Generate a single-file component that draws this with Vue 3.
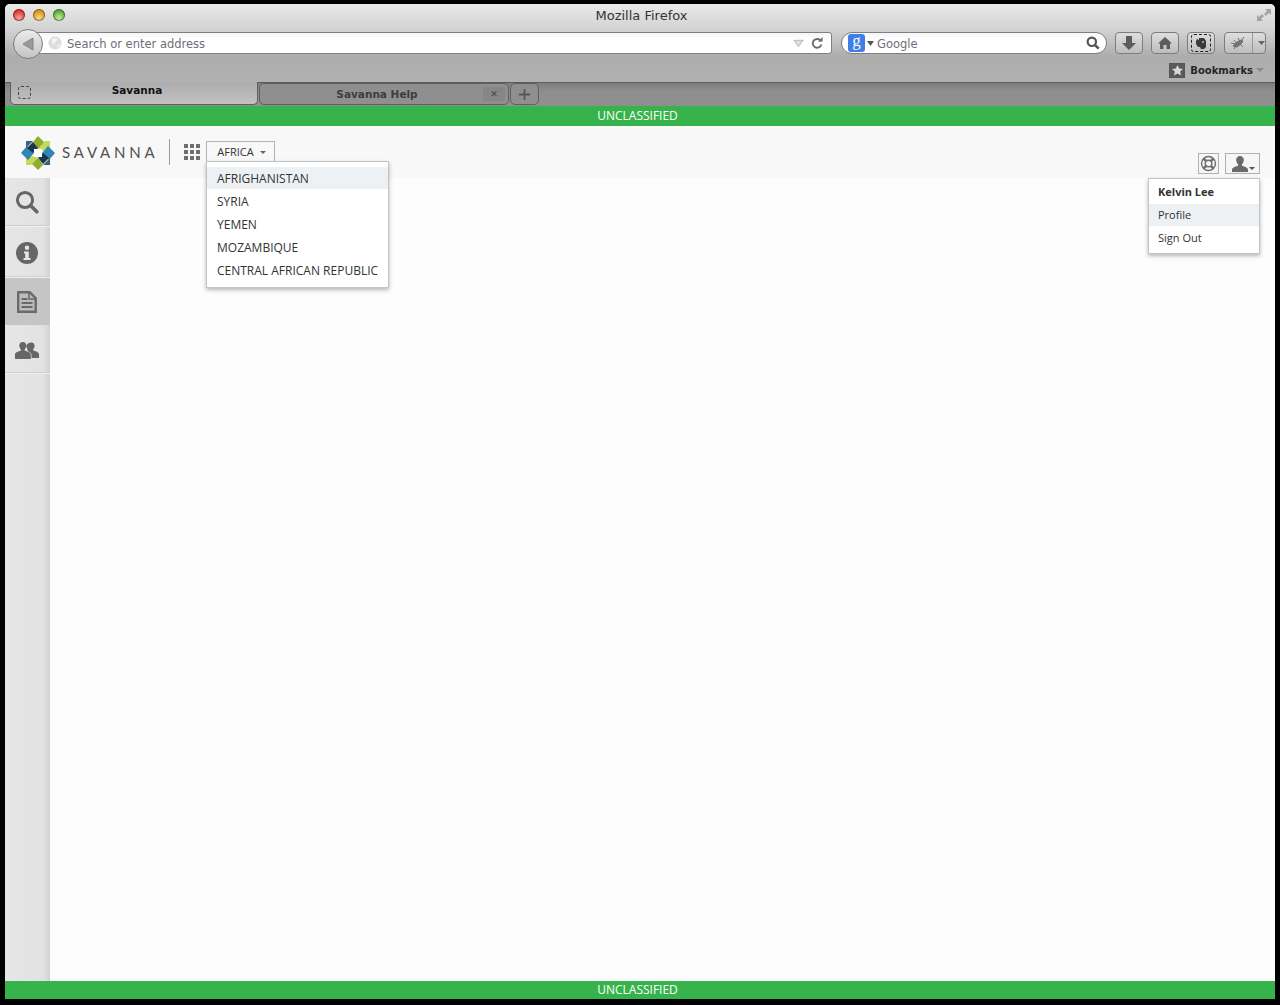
<script setup>
const regions = ['AFRIGHANISTAN', 'SYRIA', 'YEMEN', 'MOZAMBIQUE', 'CENTRAL AFRICAN REPUBLIC']
</script>

<template>
  <div class="screen">
    <div class="window">
      <div class="chrome">
        <div class="titlebar">
          <div class="lights">
            <span class="light red"></span>
            <span class="light amber"></span>
            <span class="light green"></span>
          </div>
          <span class="title">Mozilla Firefox</span>
          <svg class="resize" width="16" height="14" viewBox="0 0 16 14">
            <path d="M9 1h6v6l-2-2-3 3-2-2 3-3zM1 7l2 2 3-3 2 2-3 3 2 2H1z" fill="#a4a4a4" />
          </svg>
        </div>

        <div class="navrow">
          <div class="back">
            <svg width="14" height="14" viewBox="0 0 14 14"><path d="M12 1v12L2 7z" fill="#9a9a9a" stroke="#868686" /></svg>
          </div>
          <div class="urlbar">
            <svg class="globe" width="14" height="14" viewBox="0 0 14 14">
              <circle cx="7" cy="7" r="6.500" fill="#dcdcdc" />
              <path d="M4 3l4-1 2 2-3 2-1 3-2-2zM10 8l2-1-1 4-2 1z" fill="#f4f4f4" />
            </svg>
            <span class="placeholder">Search or enter address</span>
            <svg class="star-drop" width="11" height="9" viewBox="0 0 12 9"><path d="M1 1h10L6 8z" fill="#dedede" stroke="#b4b4b4" /></svg>
            <svg class="reload" width="12" height="12" viewBox="0 0 12 12">
              <path d="M10 4.200A4.400 4.400 0 1 0 10.400 7.600" fill="none" stroke="#6c6c6c" stroke-width="1.900" />
              <path d="M7 4.600h4.600V0z" fill="#6c6c6c" />
            </svg>
          </div>
          <div class="searchbar">
            <span class="g-badge">g</span>
            <svg class="mini" width="7" height="5" viewBox="0 0 7 5"><path d="M0 0h7L3.500 5z" fill="#555" /></svg>
            <span class="placeholder google">Google</span>
            <svg class="mag" width="14" height="14" viewBox="0 0 13 13">
              <circle cx="5.400" cy="5.400" r="3.900" fill="none" stroke="#555" stroke-width="2" />
              <path d="M8.400 8.400l3.400 3.400" stroke="#555" stroke-width="2.400" />
            </svg>
          </div>
          <div class="tool first">
            <svg width="16" height="16" viewBox="0 0 16 16"><path d="M5 1h6v7h4l-7 7-7-7h4z" fill="#5c5c5c" /></svg>
          </div>
          <div class="tool">
            <svg width="16" height="14" viewBox="0 0 16 14"><path d="M8 1L1 7.500h2V13h3.500V9h3v4H13V7.500h2z" fill="#5c5c5c" /></svg>
          </div>
          <div class="tool">
            <div class="dashed">
              <svg width="12" height="13" viewBox="0 0 12 13"><path d="M2 2l2 1V1h5l2 3v6l-2 2H6L5 10H3L1 7V4z" fill="#3a3a3a" /><circle cx="8" cy="5" r="1" fill="#bbb" /></svg>
            </div>
          </div>
          <div class="tool split">
            <svg class="bug" width="18" height="14" viewBox="0 0 18 14">
              <path d="M4 10l4-4 4-2 2 1-2 3-4 3zM9 2l2 4M15 1l-3 4M5 4l3 4M11 8l3 3M2 7l4 1M7 10l-2 3" stroke="#4e4e4e" stroke-width="1" fill="#5a5a5a" />
            </svg>
            <span class="divider"></span>
            <svg width="7" height="4" viewBox="0 0 7 4"><path d="M0 0h7L3.500 4z" fill="#666" /></svg>
          </div>
        </div>

        <div class="bookrow">
          <span class="book-icon">
            <svg width="11" height="11" viewBox="0 0 11 11"><path d="M5.500 0l1.700 3.500 3.800.5-2.800 2.600.7 3.800-3.400-1.800-3.400 1.800.7-3.800L0 4l3.800-.5z" fill="#d8d8d8" /></svg>
          </span>
          <span class="book-label">Bookmarks</span>
          <svg width="8" height="4" viewBox="0 0 8 4"><path d="M0 0h8L4 4z" fill="#8a8a8a" /></svg>
        </div>
      </div>

      <div class="tabs">
        <div class="tab current">
          <span class="tab-loading"></span>
          <span class="tab-text">Savanna</span>
        </div>
        <div class="tab inactive">
          <span class="tab-text">Savanna Help</span>
          <span class="tab-close">✕</span>
        </div>
        <div class="tab plus">
          <svg width="11" height="11" viewBox="0 0 11 11"><path d="M5.500 0v11M0 5.500h11" stroke="#555" stroke-width="1.800" /></svg>
        </div>
      </div>

      <div class="banner top">UNCLASSIFIED</div>

      <header class="appbar">
        <div class="brand">
          <svg class="logo" width="34" height="34" viewBox="0 0 34 34">
            <path d="M17 0l7 7-7 6-5-7z" fill="#8fae2c" />
            <path d="M24 5h5v7l-8 3-4-2z" fill="#c3da5a" />
            <path d="M34 17l-6 7-7-7 6-7z" fill="#2e87b4" />
            <path d="M22 17l6 5-6 6-5-6z" fill="#17384f" />
            <path d="M29 22v7h-7z" fill="#3f6079" />
            <path d="M17 34l-7-7 7-6 5 8z" fill="#8fae2c" />
            <path d="M5 22l7-2 5 2-7 7H5z" fill="#c3da5a" />
            <path d="M0 17l6-7 7 7-6 7z" fill="#2e87b4" />
            <path d="M6 12l6-6 5 6-5 5z" fill="#17384f" />
            <path d="M5 5h7l-7 7z" fill="#3f6079" />
            <rect x="13" y="13" width="8" height="8" fill="#fff" />
          </svg>
          <span class="wordmark">SAVANNA</span>
        </div>
        <span class="vrule"></span>
        <svg class="grid" width="16" height="16" viewBox="0 0 16 16" fill="#6e6e6e">
          <rect width="4" height="4" /><rect x="6" width="4" height="4" /><rect x="12" width="4" height="4" />
          <rect y="6" width="4" height="4" /><rect x="6" y="6" width="4" height="4" /><rect x="12" y="6" width="4" height="4" />
          <rect y="12" width="4" height="4" /><rect x="6" y="12" width="4" height="4" /><rect x="12" y="12" width="4" height="4" />
        </svg>
        <button class="region-btn">AFRICA<i class="caret"></i></button>
        <ul class="menu region-menu">
          <li v-for="(r, i) in regions" :key="r" :class="{ hot: i === 0 }">{{ r }}</li>
        </ul>

        <div class="user-tools">
          <button class="icon-btn">
            <svg width="17" height="17" viewBox="0 0 17 17">
              <circle cx="8.500" cy="8.500" r="7" fill="#f4f4f4" stroke="#6e6e6e" stroke-width="1.400" />
              <circle cx="8.500" cy="8.500" r="3.300" fill="#f4f4f4" stroke="#6e6e6e" stroke-width="1.400" />
              <path d="M3.600 3.600l2.600 2.600M13.400 3.600l-2.600 2.600M3.600 13.400l2.600-2.600M13.400 13.400l-2.600-2.600" stroke="#6e6e6e" stroke-width="2.600" />
            </svg>
          </button>
          <button class="icon-btn user">
            <svg width="18" height="16" viewBox="0 0 17 16"><path d="M8.500 0c2.500 0 3.800 1.800 3.800 4 0 1.900-.9 3.400-1.800 4.300v1.500c2.500.8 6 1.700 6 4.200v2H.5v-2c0-2.500 3.500-3.400 6-4.200V8.300C5.600 7.400 4.700 5.900 4.700 4c0-2.200 1.300-4 3.800-4z" fill="#6a6a6a" /></svg>
            <i class="caret small"></i>
          </button>
        </div>
        <ul class="menu user-menu">
          <li class="name">Kelvin Lee</li>
          <li class="hot">Profile</li>
          <li>Sign Out</li>
        </ul>
      </header>

      <div class="body">
        <nav class="sidebar">
          <div class="side-item s1">
            <svg width="24" height="24" viewBox="0 0 24 24">
              <circle cx="10" cy="10" r="7.600" fill="none" stroke="#666" stroke-width="3" />
              <path d="M15.800 15.800l6 6" stroke="#666" stroke-width="3.600" stroke-linecap="round" />
            </svg>
          </div>
          <div class="side-item s2">
            <svg width="22" height="22" viewBox="0 0 22 22">
              <circle cx="11" cy="11" r="11" fill="#666" />
              <circle cx="11" cy="5.800" r="2.200" fill="#e5e5e5" />
              <path d="M8 9.500h4.800V16H14.500v2h-7v-2h1.700v-4.500H8z" fill="#e5e5e5" />
            </svg>
          </div>
          <div class="side-item on">
            <svg width="20" height="22" viewBox="0 0 20 22">
              <path d="M1.200 1.200h11.500l6 6v13.600H1.200z" fill="#bcbcbc" stroke="#6a6a6a" stroke-width="2.400" />
              <path d="M12 1v7h7" fill="none" stroke="#6a6a6a" stroke-width="1.600" />
              <path d="M4.500 8h6M4.500 12h11M4.500 16h11" stroke="#6a6a6a" stroke-width="2" />
            </svg>
          </div>
          <div class="side-item s4">
            <svg width="24" height="18" viewBox="0 0 24 18">
              <path d="M16.500 1.500c2 0 3.100 1.500 3.100 3.300 0 1.400-.6 2.500-1.400 3.300v1.300c2 .7 5.800 1.200 5.800 3.900V17h-7.500v-3c0-2.100-1.900-3.200-4-4V8.100c-.8-.8-1.100-1.900-1.100-3.300 0-1.800 3-3.300 5.100-3.300z" fill="#666" />
              <path d="M7.800 1c2.200 0 3.500 1.600 3.500 3.600 0 1.500-.7 2.800-1.500 3.600v1.600c2.300.7 6 1.400 6 3.900V18H0v-4.300c0-2.500 3.500-3.200 5.800-3.900V8.200C5 7.400 4.300 6.100 4.300 4.600 4.300 2.600 5.600 1 7.800 1z" fill="#666" />
            </svg>
          </div>
        </nav>
        <main class="content"></main>
      </div>

      <div class="banner bottom">UNCLASSIFIED</div>
    </div>
  </div>
</template>

<style>
html, body { margin: 0; background: #000; }
</style>

<style scoped>
.screen {
  width: 1280px;
  height: 1005px;
  box-sizing: border-box;
  padding: 4px 5px 6px;
  background: #000;
  overflow: hidden;
}
.window {
  height: 995px;
  display: flex;
  flex-direction: column;
  border-radius: 5px 5px 0 0;
  overflow: hidden;
  font-family: "Open Sans", sans-serif;
  background: #fdfdfd;
}

/* browser chrome */
.chrome {
  height: 78px;
  display: flex;
  flex-direction: column;
  flex: none;
  background: linear-gradient(to bottom, #e9e9e9 0, #d0d0d0 28px, #adadad 52px, #b1b1b1 78px);
}
.titlebar {
  height: 28px;
  flex: none;
  display: flex;
  align-items: flex-start;
  position: relative;
}
.lights { display: flex; gap: 8px; padding: 5px 0 0 8px; }
.light { width: 12px; height: 12px; border-radius: 50%; box-shadow: inset 0 0 0 1px rgba(0,0,0,.35); }
.red { background: radial-gradient(circle at 50% 75%, #f9a3a0, #d8382f 65%); }
.amber { background: radial-gradient(circle at 50% 75%, #fbd88a, #d6921e 65%); }
.green { background: radial-gradient(circle at 50% 75%, #c8ee9a, #58a83a 65%); }
.title {
  position: absolute;
  left: 0;
  right: 0;
  top: 3px;
  padding-left: 3px;
  text-align: center;
  font: 13px/18px "DejaVu Sans", sans-serif;
  color: #333;
}
.resize { position: absolute; right: 3px; top: 4px; }

.navrow { height: 22px; display: flex; align-items: stretch; position: relative; flex: none; }
.back {
  position: relative;
  z-index: 1;
  width: 28px;
  height: 28px;
  margin: -3px -6px 0 8px;
  border-radius: 50%;
  border: 1px solid #7c7c7c;
  background: linear-gradient(#ececec, #c4c4c4);
  display: flex;
  align-items: center;
  justify-content: center;
  flex: none;
}
.urlbar, .searchbar {
  box-sizing: border-box;
  background: linear-gradient(#f6f6f6, #fff 40%);
  border: 1px solid #7f7f7f;
  display: flex;
  align-items: center;
}
.urlbar { width: 795px; border-radius: 0 3px 3px 0; padding: 0 8px 0 10px; }
.globe { margin-right: 5px; }
.placeholder { font: 11.500px "DejaVu Sans", sans-serif; color: #6e6e78; padding-top: 1px; }
.star-drop { margin-left: auto; margin-right: 7px; }
.searchbar { width: 266px; margin-left: 9px; border-radius: 11px; padding: 0 6px 0 6px; }
.g-badge {
  width: 17px;
  height: 18px;
  background: #3f7de8;
  border-radius: 3px;
  color: #fff;
  font: 17px/14px "Liberation Serif", serif;
  text-align: center;
}
.mini { margin-left: 2px; }
.google { margin-left: 3px; }
.mag { margin-left: auto; }
.tool {
  box-sizing: border-box;
  width: 28px;
  margin-left: 8px;
  border: 1px solid #7d7d7d;
  border-radius: 4px;
  background: linear-gradient(#dedede, #bdbdbd);
  display: flex;
  align-items: center;
  justify-content: center;
}
.first { margin-left: 8px; }
.dashed {
  width: 18px;
  height: 16px;
  border: 1px dashed #222;
  border-radius: 3px;
  display: flex;
  align-items: center;
  justify-content: center;
}
.split { width: 42px; margin-left: 9px; justify-content: flex-start; padding-left: 4px; }
.divider { width: 1px; height: 20px; background: #9a9a9a; margin: 0 5px 0 5px; }
.bug { opacity: .75; }
.bookrow {
  height: 28px;
  display: flex;
  align-items: center;
  justify-content: flex-end;
  padding: 4px 11px 0 0;
  box-sizing: border-box;
}
.book-icon {
  width: 16px;
  height: 15px;
  background: #5a5a5a;
  border: 1px solid #555;
  box-sizing: border-box;
  display: flex;
  align-items: center;
  justify-content: center;
  margin-right: 5px;
}
.book-label {
  font: bold 10px "DejaVu Sans", sans-serif;
  color: #262626;
  margin-right: 3px;
}

/* tabs */
.tabs {
  height: 24px;
  flex: none;
  box-sizing: border-box;
  border-top: 1px solid #5c5c5c;
  background: linear-gradient(#7d7d7d, #8f8f8f 8px);
  display: flex;
  align-items: stretch;
  padding: 0 0 1px 5px;
  gap: 1px;
}
.tab {
  box-sizing: border-box;
  border: 1px solid #5f5f5f;
  border-top: 0;
  border-radius: 0 0 5px 5px;
  display: flex;
  align-items: center;
  position: relative;
}
.current {
  width: 248px;
  margin-top: -1px;
  background: linear-gradient(#acacac, #c2c2c2);
  border-top: 0;
}
.inactive { width: 250px; background: #8f8f8f; border-top: 1px solid #5f5f5f; border-radius: 5px; }
.plus { width: 29px; justify-content: center; background: #8f8f8f; border-top: 1px solid #5f5f5f; border-radius: 5px; }
.tab-loading {
  position: absolute;
  left: 7px;
  top: 4px;
  width: 13px;
  height: 13px;
  border: 1px dashed #444;
  border-radius: 3px;
  box-sizing: border-box;
}
.tab-text {
  width: 100%;
  text-align: center;
  font: bold 10.500px "DejaVu Sans", sans-serif;
  color: #111;
  margin-top: -7px;
  padding-left: 6px;
  box-sizing: border-box;
}
.inactive .tab-text { color: #3d3d3d; margin-top: -1px; padding: 0 14px 0 0; }
.tab-close {
  position: absolute;
  right: 3px;
  top: 3px;
  width: 22px;
  height: 14px;
  background: #868686;
  color: #444;
  font: bold 9px/14px "DejaVu Sans", sans-serif;
  text-align: center;
}

/* app */
.banner {
  height: 20px;
  flex: none;
  box-sizing: border-box;
  padding-right: 5px;
  background: #36b34a;
  color: #fff;
  font-size: 12px;
  line-height: 20px;
  text-align: center;
}
.banner.bottom { height: 18px; line-height: 18px; }
.appbar {
  height: 52px;
  flex: none;
  position: relative;
  background: #f8f8f8;
  display: flex;
  align-items: flex-start;
}
.brand { display: flex; align-items: center; margin: 10px 0 0 16px; }
.logo { flex: none; }
.wordmark {
  margin-left: 7px;
  padding-bottom: 2px;
  font: 400 15px/20px Lato, sans-serif;
  letter-spacing: 3.800px;
  color: #505050;
}
.vrule { width: 1px; height: 26px; background: #9c9c9c; margin: 13px 0 0 11px; }
.grid { margin: 18px 0 0 14px; }
.region-btn {
  box-sizing: border-box;
  width: 69px;
  height: 21px;
  margin: 15px 0 0 6px;
  padding: 0 0 2px 1px;
  background: #f8f8f8;
  border: 1px solid #b4b4b4;
  border-bottom: 0;
  font: 11px "Open Sans", sans-serif;
  color: #333;
}
.caret {
  display: inline-block;
  margin-left: 6px;
  vertical-align: 2px;
  border-left: 3px solid transparent;
  border-right: 3px solid transparent;
  border-top: 3px solid #666;
}
.menu {
  position: absolute;
  margin: 0;
  list-style: none;
  box-sizing: border-box;
  background: #fff;
  border: 1px solid #c4c4c4;
  box-shadow: 0 2px 4px rgba(0, 0, 0, .28);
  color: #333;
}
.region-menu {
  left: 201px;
  top: 35px;
  width: 183px;
  height: 127px;
  padding: 5px 0 0;
  font-size: 12px;
}
.region-menu li { height: 23px; line-height: 23px; padding-left: 10px; white-space: nowrap; }
.region-menu li.hot { height: 22px; line-height: 23px; margin-bottom: 1px; }
.hot { background: #edf1f4; }
.user-tools { margin: 27px 0 0 auto; padding-right: 15px; display: flex; gap: 6px; }
.icon-btn {
  box-sizing: border-box;
  width: 21px;
  height: 21px;
  padding: 0;
  background: #f6f6f6;
  border: 1px solid #b0b0b0;
  display: flex;
  align-items: center;
  justify-content: center;
}
.icon-btn.user { width: 35px; padding-left: 0; }
.caret.small { margin: 9px 0 0 0; vertical-align: 0; border-top-color: #555; }
.user-menu {
  left: 1143px;
  top: 52px;
  width: 112px;
  height: 76px;
  padding: 2px 0 0;
  font-size: 11px;
}
.user-menu li { height: 22px; line-height: 22px; padding-left: 9px; margin-bottom: 1px; }
.user-menu li.name { font-weight: 700; }

.body { flex: 1; display: flex; min-height: 0; }
.sidebar {
  width: 45px;
  flex: none;
  background: linear-gradient(to right, #e6e6e6 0, #e2e2e2 38px, #d2d2d2 45px);
}
.side-item {
  box-sizing: border-box;
  display: flex;
  align-items: center;
  justify-content: center;
  padding-right: 2px;
}
.s1 { height: 48px; border-bottom: 1px solid #cfcfcf; box-shadow: 0 1px 0 #f0f0f0; margin-bottom: 2px; }
.s2 { height: 49px; padding-top: 2px; border-bottom: 1px solid #cfcfcf; box-shadow: 0 1px 0 #f0f0f0; margin-bottom: 1px; }
.side-item.on { height: 47px; background: #c5c5c5; margin-bottom: 1px; }
.s4 { height: 47px; padding-top: 2px; border-bottom: 1px solid #cfcfcf; box-shadow: 0 1px 0 #f0f0f0; }
.content { flex: 1; background: #fdfdfd; }
</style>
